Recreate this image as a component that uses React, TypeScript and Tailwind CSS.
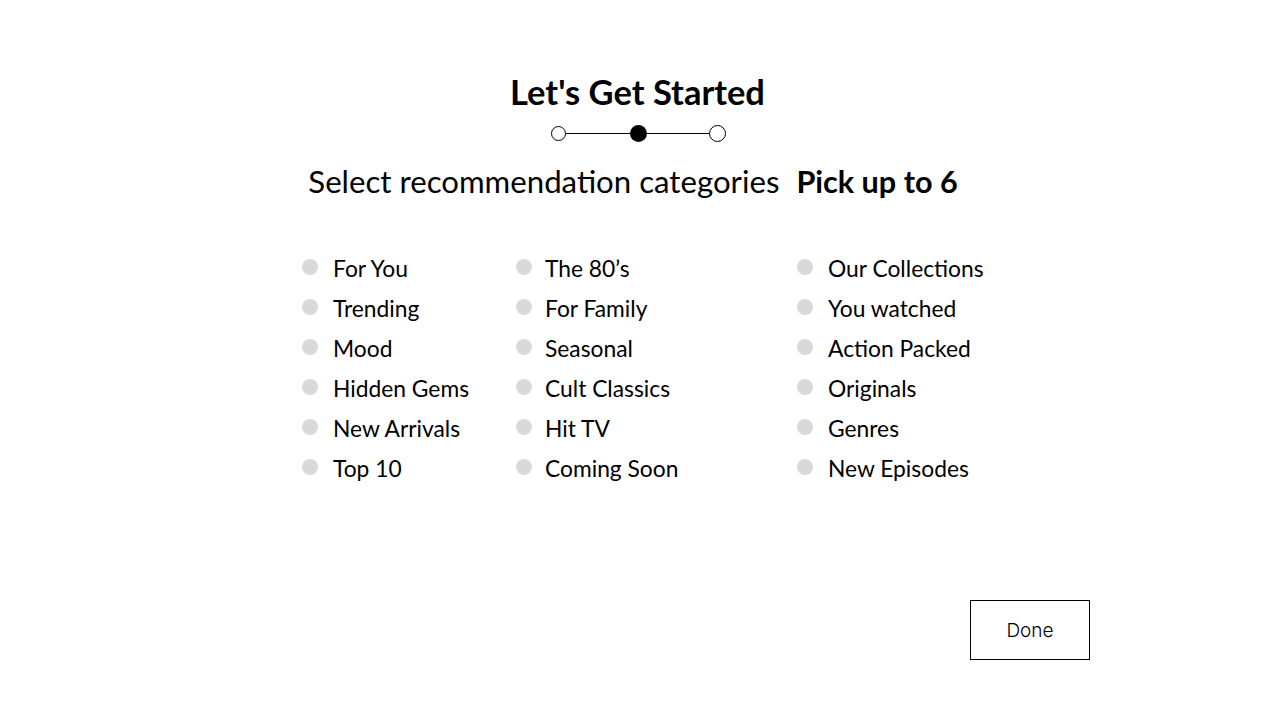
import React from "react";

const columns = [
  ["For You", "Trending", "Mood", "Hidden Gems", "New Arrivals", "Top 10"],
  ["The 80’s", "For Family", "Seasonal", "Cult Classics", "Hit TV", "Coming Soon"],
  ["Our Collections", "You watched", "Action Packed", "Originals", "Genres", "New Episodes"],
];

function Stepper() {
  return (
    <div className="flex items-center justify-center mt-[11px] ml-[-3px]">
      <span className="w-[15px] h-[15px] rounded-full border border-black bg-white" />
      <span className="w-[64px] h-px bg-black" />
      <span className="w-[17px] h-[17px] rounded-full bg-black" />
      <span className="w-[62px] h-px bg-black" />
      <span className="w-[17px] h-[17px] rounded-full border border-black bg-white" />
    </div>
  );
}

export default function App() {
  return (
    <div className="w-[1280px] h-[720px] bg-white text-black font-['Lato',sans-serif] relative">
      <div className="pt-[70px] flex flex-col items-center">
        <h1 className="text-[34.5px] leading-[44px] font-bold ml-[-5px]">Let's Get Started</h1>
        <Stepper />
        <div className="flex items-baseline gap-[17px] mt-[19px] ml-[-14px]">
          <span className="text-[31.2px] leading-[40px]">Select recommendation categories</span>
          <span className="text-[30.6px] leading-[40px] font-bold">Pick up to 6</span>
        </div>
      </div>

      <div className="grid grid-cols-[214px_281px_auto] pl-[302px] mt-[45px]">
        {columns.map((col, i) => (
          <ul key={i} className="flex flex-col">
            {col.map((item) => (
              <li key={item} className="flex items-center h-[40px]">
                <span
                  className={
                    i === 1
                      ? "w-[16px] h-[16px] rounded-full bg-[#d9d9d9] mr-[13px]"
                      : "w-[16px] h-[16px] rounded-full bg-[#d9d9d9] mr-[15px]"
                  }
                />
                <span className="text-[22.8px] leading-[40px] pt-[2px]">{item}</span>
              </li>
            ))}
          </ul>
        ))}
      </div>

      <button className="absolute left-[970px] top-[600px] w-[120px] h-[60px] border border-black flex items-center justify-center pt-[3px] text-[19px] font-light text-black font-['Inter',sans-serif]">
        Done
      </button>
    </div>
  );
}
